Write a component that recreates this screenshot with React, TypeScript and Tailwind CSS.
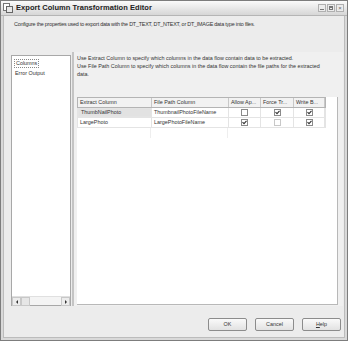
import React from "react";

const Check = ({ checked, disabled }: { checked: boolean; disabled?: boolean }) => (
  <div
    className={`w-[7px] h-[7px] border ${disabled ? "border-[#c8c8c8]" : "border-[#8a8a8a]"} bg-white flex items-center justify-center`}
  >
    {checked && (
      <svg width="5" height="5" viewBox="0 0 5 5">
        <path d="M0.5 2.2 L2 3.7 L4.5 0.8" stroke="#333" strokeWidth="1.1" fill="none" />
      </svg>
    )}
  </div>
);

export default function App() {
  const font = { fontFamily: '"Liberation Sans", Arial, sans-serif' };
  return (
    <div className="w-[350px] h-[342px] bg-white" style={font}>
      <div className="w-[348px] h-[341px] border border-[#7d7d7d] bg-[#d9d9d9] flex flex-col">
        {/* Title bar */}
        <div className="h-[15px] flex items-center bg-gradient-to-b from-[#fbfbfb] to-[#d6d6d6] border-b border-[#b5b5b5] pl-[2px] pr-[3px]">
          <svg width="10" height="10" viewBox="0 0 10 10" className="mr-[3px]">
            <rect x="0.5" y="0.5" width="6" height="7" fill="#fff" stroke="#777" />
            <rect x="3.5" y="3.5" width="6" height="6" fill="#e8e8e8" stroke="#666" />
          </svg>
          <span className="text-[7.5px] font-bold text-[#222] tracking-[0.05px]">Export Column Transformation Editor</span>
          <div className="ml-auto flex gap-[1px]">
            <div className="w-[8px] h-[8px] border border-[#b0b0b0] bg-[#ececec] flex items-end justify-center pb-[1px]">
              <div className="w-[4px] h-[1px] bg-[#777]" />
            </div>
            <div className="w-[8px] h-[8px] border border-[#b0b0b0] bg-[#ececec] flex items-center justify-center">
              <div className="w-[4px] h-[4px] border border-[#777] border-t-2" />
            </div>
            <div className="w-[8px] h-[8px] border border-[#b0b0b0] bg-[#ececec] flex items-center justify-center text-[6px] leading-none text-[#666]">
              ×
            </div>
          </div>
        </div>
        {/* Body */}
        <div className="flex-1 bg-[#ececec] mx-[2px] mb-[2px] border-x border-b border-[#bcbcbc] flex flex-col">
          <div className="h-[36px] pl-[10px] pt-[4px] text-[5.4px] tracking-[-0.22px] text-[#333]">
            Configure the properties used to export data with the DT_TEXT, DT_NTEXT, or DT_IMAGE data type into files.
          </div>
          <div className="h-[254px] flex pl-[7px] pr-[1px]">
            {/* left list */}
            <div className="w-[60px] mt-[3px] h-[251px] border border-[#a8a8a8] bg-white flex flex-col">
              <div className="flex-1 pt-[3px] pl-[2px] text-[5.4px] text-[#333] leading-[9px]">
                <div className="border border-dotted border-[#888] w-fit px-[1px] leading-[7px]">Columns</div>
                <div className="px-[1px] pt-[1px]">Error Output</div>
              </div>
              <div className="h-[9px] flex bg-[#f4f4f4] border-t border-[#e0e0e0]">
                <div className="w-[9px] h-[9px] border border-[#c8c8c8] bg-[#ececec] flex items-center justify-center">
                  <div className="w-0 h-0 border-y-[2px] border-y-transparent border-r-[2px] border-r-[#333]" />
                </div>
                <div className="w-[9px] h-[9px] border border-[#c8c8c8] bg-[#e6e6e6]" />
                <div className="flex-1" />
                <div className="w-[9px] h-[9px] border border-[#c8c8c8] bg-[#ececec] flex items-center justify-center">
                  <div className="w-0 h-0 border-y-[2px] border-y-transparent border-l-[2px] border-l-[#333]" />
                </div>
              </div>
            </div>
            {/* splitter */}
            <div className="w-[1px]" />
            {/* right panel */}
            <div className="flex-1 border-l-2 border-[#c4c4c4] bg-[#f0f0f0] flex flex-col pl-[3px] pr-[5px]">
              <div className="h-[45px] w-[256px] pt-[2px] text-[5.4px] leading-[8px] text-[#333]">
                Use Extract Column to specify which columns in the data flow contain data to be extracted.
                <br />
                Use File Path Column to specify which columns in the data flow contain the file paths for the extracted data.
              </div>
              <div className="flex-1 bg-white border-r border-b border-[#b8b8b8] mb-[1px]">
                <div className="text-[5.4px] text-[#333]">
                  <div className="flex h-[11px] bg-[#f2f2f2] border border-[#b4b4b4] w-[249px]">
                    <div className="w-[74px] border-r border-[#c8c8c8] pl-[2px] flex items-center">Extract Column</div>
                    <div className="w-[77px] border-r border-[#c8c8c8] pl-[2px] flex items-center">File Path Column</div>
                    <div className="w-[32px] border-r border-[#c8c8c8] pl-[2px] flex items-center">Allow Ap...</div>
                    <div className="w-[33px] border-r border-[#c8c8c8] pl-[2px] flex items-center">Force Tr...</div>
                    <div className="w-[31px] pl-[2px] flex items-center border-r border-[#c8c8c8]">Write B...</div>
                  </div>
                  {[
                    { a: "ThumbNailPhoto", b: "ThumbnailPhotoFileName", c: [false, true, true], dis: [false, false, false], sel: true },
                    { a: "LargePhoto", b: "LargePhotoFileName", c: [true, false, true], dis: [false, true, false], sel: false },
                  ].map((r) => (
                    <div key={r.a} className="flex h-[10px] border-x border-b border-[#e4e4e4] w-[249px]">
                      <div
                        className={`w-[74px] pl-[2px] flex items-center border-r border-[#e4e4e4] ${r.sel ? "bg-[#e2e2e2] border border-[#a8a8a8]" : ""}`}
                      >
                        {r.a}
                      </div>
                      <div className="w-[77px] border-r border-[#e4e4e4] pl-[2px] flex items-center overflow-hidden whitespace-nowrap">{r.b}</div>
                      <div className="w-[32px] border-r border-[#e4e4e4] flex items-center justify-center">
                        <Check checked={r.c[0]} disabled={r.dis[0]} />
                      </div>
                      <div className="w-[33px] border-r border-[#e4e4e4] flex items-center justify-center">
                        <Check checked={r.c[1]} disabled={r.dis[1]} />
                      </div>
                      <div className="w-[31px] border-r border-[#e4e4e4] flex items-center justify-center">
                        <Check checked={r.c[2]} disabled={r.dis[2]} />
                      </div>
                    </div>
                  ))}
                  <div className="flex h-[10px] w-[249px]">
                    <div className="w-[74px] border-r border-[#eeeeee]" />
                    <div className="w-[77px] border-r border-[#eeeeee]" />
                  </div>
                </div>
              </div>
            </div>
          </div>
          {/* footer */}
          <div className="flex-1 flex items-center justify-end gap-[8px] pr-[3px] pt-[6px] text-[5.4px] text-[#333]">
            {["OK", "Cancel", "Help"].map((t) => (
              <div
                key={t}
                className="w-[39px] h-[13px] rounded-[2px] border border-[#8c8c8c] bg-gradient-to-b from-[#fafafa] to-[#e2e2e2] flex items-center justify-center"
              >
                {t === "Help" ? (
                  <span>
                    <span className="underline">H</span>elp
                  </span>
                ) : (
                  t
                )}
              </div>
            ))}
          </div>
        </div>
      </div>
    </div>
  );
}
